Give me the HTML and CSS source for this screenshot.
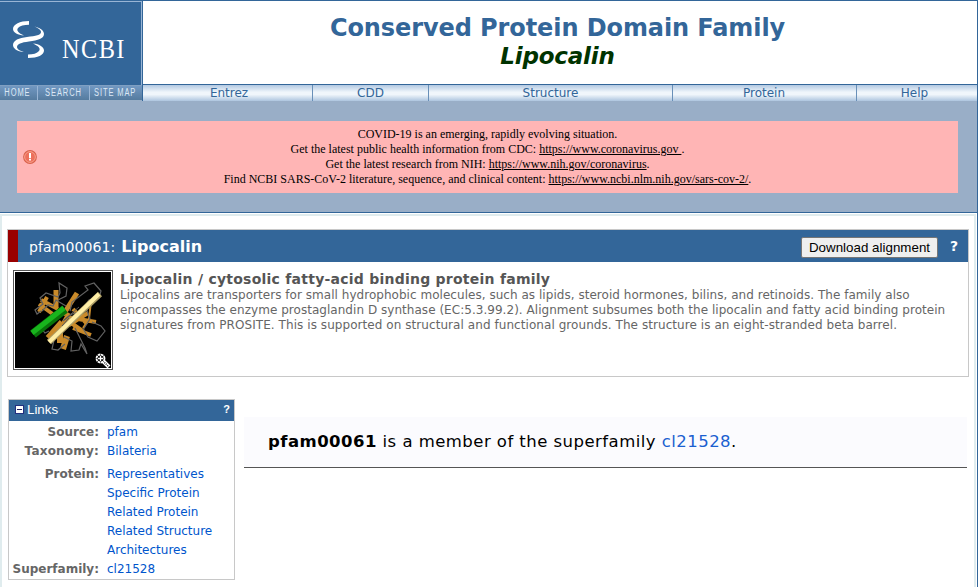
FILE: index.html
```html
<!DOCTYPE html>
<html lang="en">
<head>
<meta charset="utf-8">
<title>CDD Conserved Protein Domain Family: Lipocalin</title>
<link rel="stylesheet" href="styles.css">
</head>
<body>
<div class="page">
  <header class="top">
    <div class="brand">
      <a class="logo">
        <svg width="140" height="82" viewBox="0 0 140 82">
          <g fill="#fff">
            <path d="M29 19C20 19 13 22.500 13 27C13 30.500 18 33 24 33.500C18.500 31 16 28.500 18 26C20 23.500 24 22.800 29 22.800Z"/>
            <path d="M33 24C40 25.500 44 28.500 44 32C44 36.500 38 38.500 29 39.500C21 40.500 17 42 17 45C17 47 20 49 24 50C17 49.500 13 46.500 13 43C13 38.500 19 35.800 27 35C36 34 41 33 41 30C41 27.500 37.500 25.500 33 24Z"/>
            <path d="M33 41.500C38.500 44 41 46.500 39 49C37 51.500 33 52.500 28 52.500V56C38 56 44 53 44 48.500C44 45 39.500 42 33 41.500Z"/>
          </g>
        </svg>
        <span class="logo-text">NCBI</span>
      </a>
      <nav class="sitenav"><a class="home"><span>HOME</span></a><a class="search"><span>SEARCH</span></a><a class="map"><span>SITE MAP</span></a></nav>
    </div>
    <div class="heading">
      <div class="titles"><h1>Conserved Protein Domain Family</h1><h2>Lipocalin</h2></div>
      <nav class="tabs"><a class="entrez">Entrez</a><a class="cdd">CDD</a><a class="structure">Structure</a><a class="protein">Protein</a><a class="help">Help</a></nav>
    </div>
  </header>
  <section class="band">
    <div class="notice">
      <svg class="alert" width="14" height="14" viewBox="0 0 14 14"><circle cx="7" cy="7" r="6.900" fill="#d9604a"/><circle cx="7" cy="7" r="5.400" fill="#ed705c" stroke="#fbb09c" stroke-width=".8"/><path d="M7 3V8.200M7 9V10.600" stroke="#fff" stroke-width="2"/></svg>
      <div class="notice-text">
        <p>COVID-19 is an emerging, rapidly evolving situation.</p>
        <p>Get the latest public health information from CDC: <a>https://www.coronavirus.gov </a>.</p>
        <p>Get the latest research from NIH: <a>https://www.nih.gov/coronavirus</a>.</p>
        <p>Find NCBI SARS-CoV-2 literature, sequence, and clinical content: <a>https://www.ncbi.nlm.nih.gov/sars-cov-2/</a>.</p>
      </div>
    </div>
  </section>
  <main class="content">
    <section class="summary">
      <div class="summary-bar">
        <div class="summary-name"><span class="acc">pfam00061:</span><b>Lipocalin</b></div>
        <button class="download">Download alignment</button>
        <a class="qmark">?</a>
      </div>
      <div class="summary-body">
        <div class="thumb">
          <svg width="96" height="96" viewBox="0 0 96 96">
            <rect width="96" height="96" fill="#000"/>
            <g stroke="#c98a2a" fill="none">
              <path d="M41 18V35M62 21L48 43" stroke-width="5"/>
              <path d="M26 28L43 37M24 32L39 43M32 25L24 40M42 62L54 41" stroke-width="4"/>
              <path d="M33 66L47 50M45 58V71M52 64L48 77" stroke-width="6"/>
              <path d="M51 45L81 50M52 48L69 60M58 56L76 63M58 37L72 52M54 53L73 41" stroke-width="4"/>
              <path d="M76 29L74 47L68 56" stroke-width="2"/>
            </g>
            <g stroke="#626262" fill="none" stroke-width="1.2">
              <path d="M26 39L22 42L20 38L28 32L25 26L31 21L43 25L45 21L44 11L52 16L51 24L43 28"/>
              <path d="M55 39L57 30L73 18L70 14L79 11L86 19L84 26L74 28L66 39L57 42L48 49"/>
              <path d="M77 50L86 54L90 59L82 69L73 65L69 58M60 56L65 66L70 76L72 82L66 72L64 78L56 79L57 69L49 65M39 68L37 77L43 78L50 72M26 56L30 61L34 59M71 36L75 47L68 58"/>
              <path d="M27 39L33 33L38 34L41 28L51 34"/>
            </g>
            <path d="M18 62L50 37" stroke="#087409" stroke-width="9"/><path d="M17 61L49 36" stroke="#18b51d" stroke-width="5"/>
            <path d="M34 70L85 22" stroke="#ad9d65" stroke-width="6"/><path d="M34 70L84 22" stroke="#ffeea6" stroke-width="4"/>
            <path d="M49 48L64 35M47 54L54 46" stroke="#555" stroke-width="1"/>
            <g><path d="M88 89L94 95" stroke="#fff" stroke-width="4"/><path d="M88 89L94 95" stroke="#222" stroke-width="1.5" stroke-dasharray="1 1"/><circle cx="85.500" cy="86.500" r="4" fill="#000" stroke="#fff" stroke-width="1.800" stroke-dasharray="2.600 .54"/><path d="M85.500 84V89M83 86.500H88" stroke="#fff" stroke-width="1.300"/></g>
          </svg>
        </div>
        <div class="description">
          <h3>Lipocalin / cytosolic fatty-acid binding protein family</h3>
          <p>Lipocalins are transporters for small hydrophobic molecules, such as lipids, steroid hormones, bilins, and retinoids. The family also</p>
          <p>encompasses the enzyme prostaglandin D synthase (EC:5.3.99.2). Alignment subsumes both the lipocalin and fatty acid binding protein</p>
          <p class="last">signatures from PROSITE. This is supported on structural and functional grounds. The structure is an eight-stranded beta barrel.</p>
        </div>
      </div>
    </section>
    <div class="columns">
      <aside class="links">
        <div class="links-bar"><svg width="9" height="9" viewBox="0 0 9 9"><rect x=".5" y=".5" width="8" height="8" fill="#fff" stroke="#223080"/><path d="M2 4.500H7" stroke="#202060"/></svg><span>Links</span><a>?</a></div>
        <dl>
          <dt>Source:</dt><dd><a>pfam</a></dd>
          <dt class="wide">Taxonomy:</dt><dd><a>Bilateria</a></dd>
          <dt class="group">Protein:</dt><dd class="group"><a>Representatives</a><a>Specific Protein</a><a>Related Protein</a><a>Related Structure</a><a>Architectures</a></dd>
          <dt>Superfamily:</dt><dd><a>cl21528</a></dd>
        </dl>
      </aside>
      <section class="member"><p><b>pfam00061</b> is a member of the superfamily <a>cl21528</a>.</p></section>
    </div>
  </main>
</div>
</body>
</html>
```
FILE: styles.css
```css
* { box-sizing: border-box; }
body { margin: 0; overflow: hidden; background: #fff; font-family: "DejaVu Sans", sans-serif; }
h1, h2, h3, p, dl, dd { margin: 0; }
p { white-space: nowrap; }
.page { width: 978px; height: 587px; border-right: 1px solid #369; display: flex; flex-direction: column; }
.top { height: 101px; border-top: 1px solid #369; display: flex; flex: none; }
.brand { width: 143px; border-right: 1px solid #369; }
.logo { display: block; position: relative; height: 84px; background: #369; border-top: 1px solid #99b5d5; border-right: 1px solid #99b5d5; }
.logo svg { display: block; }
.logo-text { position: absolute; left: 62px; top: 31px; color: #fff; font: 27px/32px "Liberation Serif", serif; letter-spacing: 1.6px; transform: scaleX(.9); transform-origin: left; }
.sitenav { display: flex; height: 16px; border-top: 1px solid #7f9fc2; border-bottom: 1px solid #99afc7; background: linear-gradient(#7298c2, #557b9f); color: #dce8f5; font: 10px/14px "Liberation Sans", sans-serif; }
.sitenav a { display: flex; justify-content: center; border-right: 1px solid #99b5d5; }
.sitenav span { flex: none; white-space: nowrap; letter-spacing: 1.2px; transform: scaleX(.75); }
.home { width: 38px; padding-right: 2px; }
.search { width: 52px; }
.sitenav .map { width: 52px; border-right-width: 0; padding-right: 1px; }
.heading { flex: 1; }
.titles { height: 83px; padding-top: 13px; text-align: center; }
.titles h1 { color: #369; font-size: 24px; line-height: 28px; letter-spacing: -.09px; padding-right: 5px; }
.titles h2 { color: #030; font-size: 23px; line-height: 29px; font-style: italic; letter-spacing: -.2px; padding-right: 5px; }
.tabs { display: flex; height: 17px; border-top: 1px solid #369; background: linear-gradient(#b3c9e2, #f0f6fb 45%, #f0f6fb 60%, #adc5df); color: #369; font-size: 12px; line-height: 16px; text-align: center; }
.tabs a + a { border-left: 1px solid #6990b8; }
.entrez { width: 169px; padding-left: 3px; }
.cdd { width: 116px; }
.structure { width: 244px; }
.protein { width: 184px; padding-right: 1px; }
.help { width: 121px; padding-right: 5px; }
.band { height: 112px; flex: none; background: #99aec7; border-bottom: 1px solid #369; padding: 20px 19px 0 17px; }
.notice { display: flex; align-items: center; height: 72px; padding: 0 7px 0 6px; background: #ffb5b5; }
.notice-text { flex: 1; text-align: center; font: 12px/15px "Liberation Serif", serif; padding-right: 13px; }
.notice a { text-decoration: underline; white-space: pre; }
.content { flex: 1; margin: 1px 1px 0 0; border: 2px solid #e0ecee; border-bottom: 0; padding: 13px 6px 0 5px; }
.summary { border: 1px solid #c8c8c8; height: 148px; width: 962px; }
.summary-bar { display: flex; align-items: center; height: 32px; background: #369; border-left: 10px solid #900; color: #fff; padding: 0 9px 0 11px; }
.summary-name { display: flex; flex: 1; gap: 6px; align-items: baseline; font-size: 16px; }
.acc { font-size: 14px; letter-spacing: .1px; }
.download { height: 21px; width: 137px; margin-top: 2px; padding: 0; border: 1px solid #767676; border-radius: 2px; background: #efefef; color: #000; font: 13.333px/17px "Liberation Sans", sans-serif; letter-spacing: .02px; white-space: nowrap; }
.qmark { width: 9px; margin-left: 12px; font: bold 14px "DejaVu Sans", sans-serif; }
.summary-body { display: flex; padding: 8px 0 0 5px; }
.thumb { width: 100px; height: 100px; border: 1px solid #555; padding: 1px; }
.thumb svg { display: block; }
.description { margin: 1px 0 0 7px; color: #666; font-size: 12px; line-height: 15px; letter-spacing: .036px; }
.description .last { letter-spacing: .062px; }
.description h3 { color: #555; font-size: 14px; line-height: 17px; letter-spacing: .24px; white-space: nowrap; }
.columns { display: flex; margin: 22px 0 0 1px; }
.links { width: 227px; height: 181px; border: 1px solid #c8c8c8; flex: none; }
.links-bar { display: flex; align-items: center; height: 21px; background: #369; color: #fff; padding: 0 4px 2px 6px; font: 13.333px/19px "Liberation Sans", sans-serif; }
.links-bar span { flex: 1; margin-left: 3px; }
.links-bar a { font-weight: bold; font-size: 11px; }
.links dl { display: grid; grid-template-columns: 90px 1fr; column-gap: 8px; padding-top: 2px; font-size: 12px; line-height: 19px; }
.links dt { color: #666; font-weight: bold; text-align: right; }
.links .wide { letter-spacing: .2px; }
.links dd { color: #05c; }
.links dd a { display: block; }
.links .group { padding-top: 4px; }
.member { width: 723px; height: 51px; margin: 18px 0 0 9px; padding: 13px 0 0 24px; background: #fbfbfe; border-bottom: 1px solid #555; font-size: 16.5px; line-height: 23px; letter-spacing: .46px; }
.member a { color: #1a5fd0; }
```
